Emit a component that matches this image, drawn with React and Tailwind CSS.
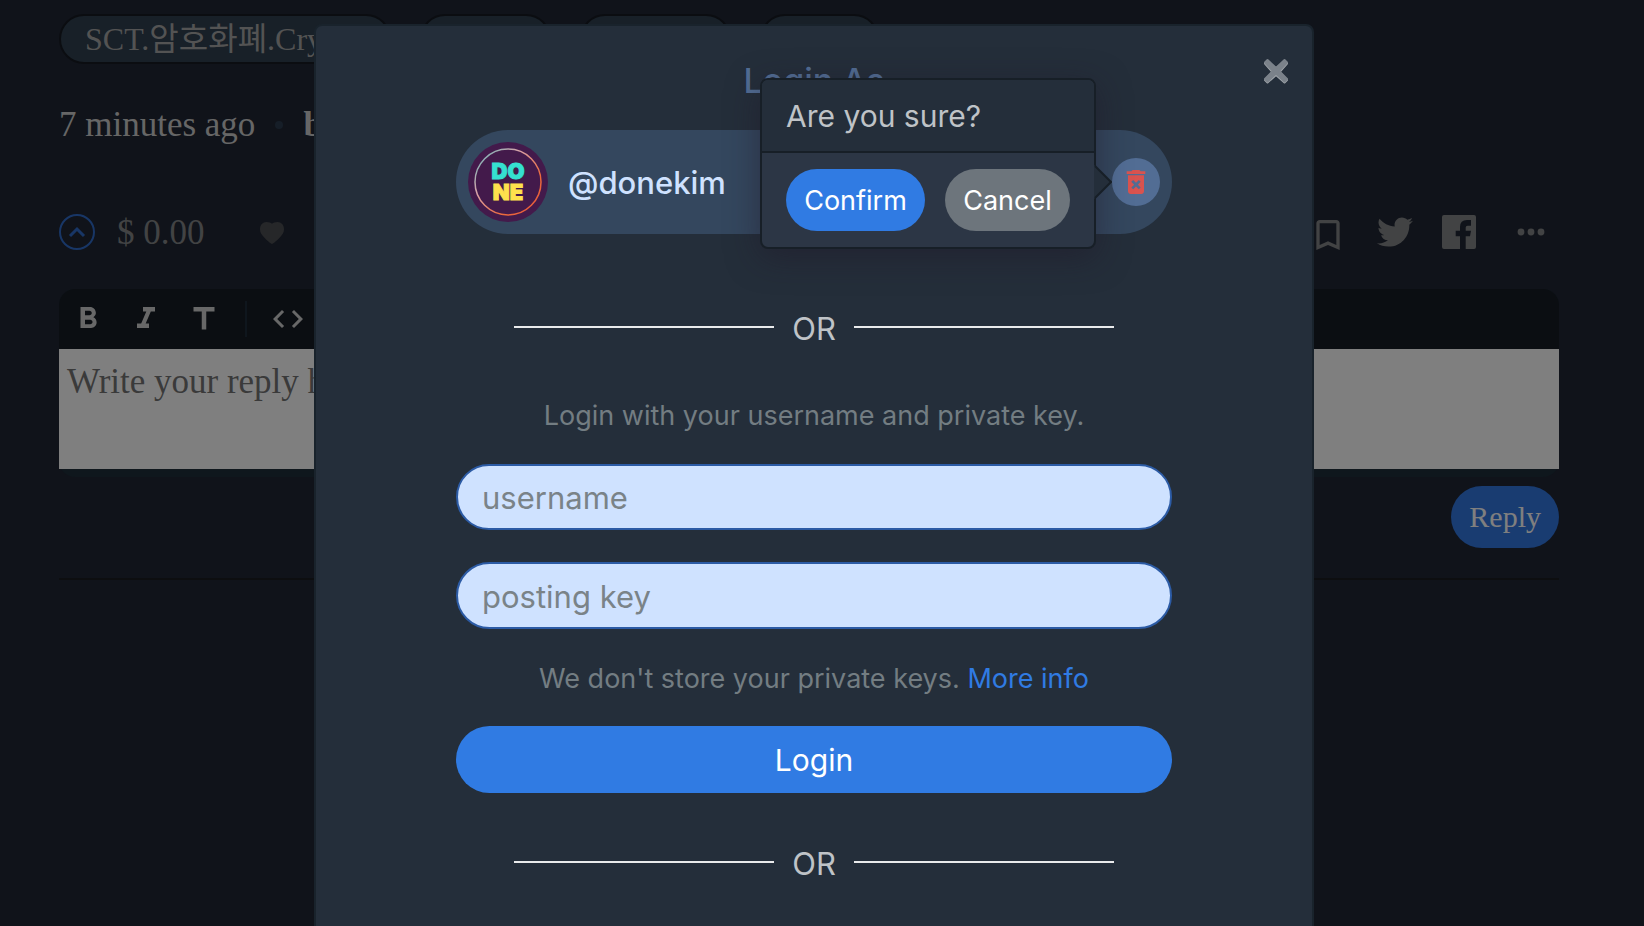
import React, { useState } from 'react';
import {
  MdBookmarkBorder,
  MdCode,
  MdDeleteForever,
  MdFormatBold,
  MdFormatItalic,
  MdTitle,
} from 'react-icons/md';
import { FaTwitter } from 'react-icons/fa';

const UpvoteIcon = () => (
  <svg className="size-9" viewBox="0 0 36 36" fill="none" stroke="currentColor">
    <circle cx="18" cy="18" r="17" strokeWidth="2" />
    <path d="M11 22l7-7 7 7" strokeWidth="3" />
  </svg>
);

const HeartIcon = () => (
  <svg className="h-[22px] w-6" viewBox="0 0 24 22" fill="currentColor">
    <path d="M12 22C11 22 7 18.500 4 15.300C1.500 12.500 0 10.300 0 7.200C0 3 2.800 0 6.500 0C8.800 0 10.800 .7 12 1.800C13.200 .7 15.200 0 17.500 0C21.200 0 24 3 24 7.200C24 10.300 22.500 12.500 20 15.300C17 18.500 13 22 12 22Z" />
  </svg>
);

const FacebookIcon = () => (
  <svg className="size-[34px]" viewBox="0 0 34 34" fill="currentColor">
    <path d="M2 0h30a2 2 0 0 1 2 2v30a2 2 0 0 1-2 2h-8.300V21.300h4.300l1-5.600h-5.300v-3.100q0-1.900 1.900-1.900H29V5h-4q-7 0-7 7v3.700h-4.300v5.600H18V34H2a2 2 0 0 1-2-2V2a2 2 0 0 1 2-2z" />
  </svg>
);

const DotsIcon = () => (
  <svg className="h-7 w-7" viewBox="0 0 28 28" fill="currentColor">
    <circle cx="4" cy="14" r="3.4" />
    <circle cx="14" cy="14" r="3.4" />
    <circle cx="24" cy="14" r="3.4" />
  </svg>
);

const CloseIcon = () => (
  <svg className="h-[27px] w-[26px]" viewBox="0 0 26 27" strokeLinejoin="round" strokeWidth="2">
    <path
      d="M4.500 3L13 10.500L21.500 3L24 5.500L16.500 14L24 22L21.500 24.500L13 17L4.500 24.500L2 22L9.500 14L2 5.500Z"
      fill="#a0a5aa"
      stroke="#a0a5aa"
    />
    <path
      d="M4.500 2L13 10L21.500 2L24 4.500L16 13L24 21L21.500 23.500L13 15.500L4.500 23.500L2 21L10 13L2 4.500Z"
      fill="#7b828a"
      stroke="#7b828a"
    />
  </svg>
);

const Avatar = () => (
  <svg className="size-20 shrink-0" viewBox="0 0 80 80">
    <defs>
      <linearGradient id="ring" x1="0" y1="0" x2="1" y2="1">
        <stop offset="0" stopColor="#5fb8bd" />
        <stop offset="0.35" stopColor="#d9a3a8" />
        <stop offset="0.7" stopColor="#ec6a3c" />
        <stop offset="1" stopColor="#e8563a" />
      </linearGradient>
    </defs>
    <circle cx="40" cy="40" r="40" fill="#431a4b" />
    <circle cx="40" cy="40" r="33" fill="none" stroke="url(#ring)" strokeWidth="1.5" />
    <g fontFamily="Inter, sans-serif" fontWeight="900" fontSize="22" textAnchor="middle" strokeWidth="1">
      <text x="40" y="37" fill="#35e0d0" stroke="#35e0d0">DO</text>
      <text x="40" y="58" fill="#ffe14d" stroke="#ffe14d">NE</text>
    </g>
  </svg>
);

const OrDivider = () => (
  <div className="flex h-12 items-center justify-center gap-[18px] px-[58px]">
    <span className="h-0.5 flex-1 bg-[#e9eaeb]" />
    <span className="w-11 pt-1 text-center text-[31px] leading-[44px] text-[#bfc3c7]">OR</span>
    <span className="h-0.5 flex-1 bg-[#e9eaeb]" />
  </div>
);

const Post = () => {
  const [reply, setReply] = useState('');

  return (
    <div className="pr-[26px] font-['Liberation_Serif','Noto_Sans_CJK_KR',serif] text-[35px] leading-[48px]">
      <article className="mx-auto max-w-[1500px]">
        {/* Tags */}
        <div className="flex gap-[29px] pt-3.5">
          <a
            href="#"
            className="flex h-[50px] w-[332px] items-center rounded-full border-2 border-[#161a22] bg-[#304050] px-6 text-[32px] whitespace-nowrap text-[#a6a6a6]"
          >
            SCT.암호화폐.Crypto
          </a>
          <span className="h-[50px] w-[131px] rounded-full border-2 border-[#161a22] bg-[#304050]" />
          <span className="h-[50px] w-[151px] rounded-full border-2 border-[#161a22] bg-[#304050]" />
          <span className="h-[50px] w-[119px] rounded-full border-2 border-[#161a22] bg-[#304050]" />
        </div>

        <div className="mt-[37px] flex h-12 items-center text-[#cccccc]">
          <span>7 minutes ago</span>
          <span className="mx-5 size-2 rounded-full bg-[#2c3c50]" />
          <b>by</b>
        </div>

        {/* Votes and sharing */}
        <div className="mt-[59px] flex h-12 items-center text-[#848688]">
          <button aria-label="Upvote" className="text-[#306dcc]">
            <UpvoteIcon />
          </button>
          <span className="ml-[22px] pt-0.5">$ 0.00</span>
          <button aria-label="Like" className="ml-[55px] pt-0.5 text-[#4c4e52]">
            <HeartIcon />
          </button>
          <div className="ml-auto flex items-center gap-[27px]">
            <button aria-label="Bookmark" className="pt-1.5">
              <MdBookmarkBorder className="size-10" />
            </button>
            <a href="#" aria-label="Twitter" className="flex w-10 justify-center">
              <FaTwitter className="size-9" />
            </a>
            <a href="#" aria-label="Facebook">
              <FacebookIcon />
            </a>
            <button aria-label="More" className="flex w-14 justify-center">
              <DotsIcon />
            </button>
          </div>
        </div>

        {/* Reply editor */}
        <div className="mt-[33px] rounded-2xl bg-[#1e2e3a] pb-2">
          <div className="flex h-[60px] items-center gap-[22px] rounded-t-2xl bg-[#161c24] px-[11px] text-[#d0d0d0]">
            <button aria-label="Bold">
              <MdFormatBold className="size-9" />
            </button>
            <button aria-label="Italic">
              <MdFormatItalic className="size-9" />
            </button>
            <button aria-label="Title">
              <MdTitle className="size-9" />
            </button>
            <span className="mx-px h-9 w-0.5 bg-[#1e2c3a]" />
            <button aria-label="Code">
              <MdCode className="size-9" />
            </button>
          </div>
          <textarea
            aria-label="Reply"
            placeholder="Write your reply here..."
            value={reply}
            onChange={(e) => setReply(e.target.value)}
            className="block h-[120px] w-full resize-none bg-white px-2 pt-[9px] text-black placeholder:text-[#757575]"
          />
        </div>
        <div className="mt-[9px] flex justify-end">
          <button className="h-[62px] rounded-full bg-[#3278e2] px-[18px] text-[30px] text-white">Reply</button>
        </div>
        <hr className="mt-[30px] border-t-2 border-[#1a1c20]" />
      </article>
    </div>
  );
};

const ConfirmPopover = () => (
  <div className="absolute top-[-52px] right-[76px] w-[336px] rounded-lg border-2 border-[#171f27] bg-[#2c3645] shadow-[0_8px_32px_rgba(32,24,40,0.5)]">
    <h3 className="h-[73px] rounded-t-md border-b-2 border-[#171f27] bg-[#242e3a] px-6 pt-px text-[30px] leading-[71px] text-[#bfc3c7]">
      Are you sure?
    </h3>
    <div className="flex justify-between px-6 py-4 text-[27px] text-white">
      <button className="h-[62px] w-[139px] rounded-full bg-[#307be3] pt-0.5">Confirm</button>
      <button className="h-[62px] w-[125px] rounded-full bg-[#6d757c] pt-0.5">Cancel</button>
    </div>
    <svg className="absolute top-[85px] left-[332px] h-[34px] w-[18px]" viewBox="0 0 18 34">
      <path d="M0 0L17 17L0 34Z" fill="#242e3a" />
      <path d="M1 1L17 17L1 33" fill="none" stroke="#171f27" strokeWidth="2" />
    </svg>
  </div>
);

const LoginModal = () => {
  const [username, setUsername] = useState('');
  const [postingKey, setPostingKey] = useState('');

  return (
    <div
      role="dialog"
      aria-label="Login"
      className="relative mx-auto mt-6 min-h-screen w-full max-w-[1000px] rounded-lg border-2 border-[#19232c] bg-[#242e3a] px-[140px] pt-8 font-['Inter',sans-serif]"
    >
      <button aria-label="Close" className="absolute top-8 right-[23px]">
        <CloseIcon />
      </button>

      <h2 className="pt-px text-center text-[34px] leading-[44px] font-medium text-[#526d94]">Login As</h2>

      {/* Saved account */}
      <div className="relative mt-[27px] flex h-[104px] items-center rounded-full bg-[#34475e] px-3">
        <Avatar />
        <span className="ml-5 pt-0.5 text-[31px] font-medium text-[#cfe2ff]">@donekim</span>
        <button
          aria-label="Delete account"
          className="ml-auto flex size-12 items-center justify-center rounded-full bg-[#526d94] text-[#d9534f]"
        >
          <MdDeleteForever className="size-8" />
        </button>
        <ConfirmPopover />
      </div>

      <div className="mt-[69px]">
        <OrDivider />
      </div>

      <form className="mt-11 text-center" onSubmit={(e) => e.preventDefault()}>
        <p className="text-[27px] leading-[42px] text-[#737d82]">Login with your username and private key.</p>
        <input
          aria-label="username"
          placeholder="username"
          value={username}
          onChange={(e) => setUsername(e.target.value)}
          className="mt-[27px] block h-[66px] w-full rounded-full border-2 border-[#2c5ba5] bg-[#cfe2ff] px-6 text-[31px] text-[#242e3a] placeholder:text-[#7a8388]"
        />
        <input
          type="password"
          aria-label="posting key"
          placeholder="posting key"
          value={postingKey}
          onChange={(e) => setPostingKey(e.target.value)}
          className="mt-8 block h-[67px] w-full rounded-full border-2 border-[#2c5ba5] bg-[#cfe2ff] px-6 pt-0.5 text-[31px] text-[#242e3a] placeholder:text-[#7a8388]"
        />
        <p className="mt-[29px] text-[27px] leading-[42px] text-[#737d82]">
          We don't store your private keys.{' '}
          <a href="#" className="text-[#307be3]">
            More info
          </a>
        </p>
        <button className="mt-[26px] h-[67px] w-full rounded-full bg-[#307be3] pt-0.5 text-[30px] text-white">
          Login
        </button>
      </form>

      <div className="mt-[45px]">
        <OrDivider />
      </div>
    </div>
  );
};

const App = () => {
  return (
    <div className="min-h-screen bg-[#202634]">
      <Post />
      {/* Backdrop */}
      <div className="fixed inset-0 overflow-hidden bg-black/50 pr-4">
        <LoginModal />
      </div>
    </div>
  );
};

export default App;
